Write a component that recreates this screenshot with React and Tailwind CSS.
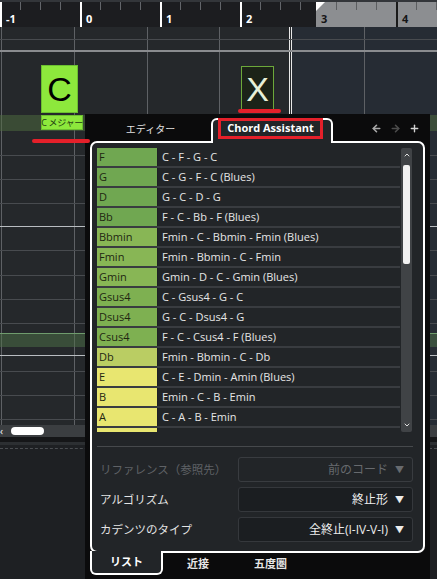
import { ArrowLeft, ArrowRight, Plus, ChevronUp, ChevronDown } from "lucide-react";

const chords = [
  { key: "F", prog: "C - F - G - C", color: "bg-[#70a751]" },
  { key: "G", prog: "C - G - F - C (Blues)", color: "bg-[#70a751]" },
  { key: "D", prog: "G - C - D - G", color: "bg-[#70a751]" },
  { key: "Bb", prog: "F - C - Bb - F (Blues)", color: "bg-[#70a751]" },
  { key: "Bbmin", prog: "Fmin - C - Bbmin - Fmin (Blues)", color: "bg-[#88b655]" },
  { key: "Fmin", prog: "Fmin - Bbmin - C - Fmin", color: "bg-[#88b655]" },
  { key: "Gmin", prog: "Gmin - D - C - Gmin (Blues)", color: "bg-[#88b655]" },
  { key: "Gsus4", prog: "C - Gsus4 - G - C", color: "bg-[#7eb051]" },
  { key: "Dsus4", prog: "G - C - Dsus4 - G", color: "bg-[#7eb051]" },
  { key: "Csus4", prog: "F - C - Csus4 - F (Blues)", color: "bg-[#7eb051]" },
  { key: "Db", prog: "Fmin - Bbmin - C - Db", color: "bg-[#bacd63]" },
  { key: "E", prog: "C - E - Dmin - Amin (Blues)", color: "bg-[#e8e670]" },
  { key: "B", prog: "Emin - C - B - Emin", color: "bg-[#e8e670]" },
  { key: "A", prog: "C - A - B - Emin", color: "bg-[#e8e670]" },
  { key: "", prog: "", color: "bg-[#e8e670]" },
];

// ruler cell: 4 quarters, number in the first one, ticks on the others
const RulerBar = ({ n, w, grey }) => {
  const last = w - 60;
  return (
    <div
      className={`flex h-full border-l-2 ${grey ? "border-[#1a1a1a] bg-[#8c8e91]" : "border-white"} ${w === 80 ? "w-[80px]" : "w-[76px]"}`}
    >
      <div className={`w-[18px] pl-[4px] pt-[11px] text-[11px] font-bold leading-none ${grey ? "text-[#151515]" : "text-white"}`}>
        {n}
      </div>
      {[20, 20, last].map((q, i) => (
        <div key={i} className={q === 20 ? "w-[20px]" : "w-[16px]"}>
          <div className={`h-[8px] w-px ${grey ? "bg-[#5c5e61]" : "bg-[#62656a]"}`} />
        </div>
      ))}
    </div>
  );
};

const Line = ({ white }) => (
  <div className={`h-px ${white ? "bg-[#b9bdc1]" : "bg-[#484b4f]"}`} />
);

const Timeline = () => (
  <div className="flex flex-col">
    <div className="h-[2px] bg-[#33363a]" />
    <div className="flex h-[25px] bg-[#1c1d20]">
      <div className="w-px" />
      <RulerBar n="-1" w={80} />
      <RulerBar n="0" w={80} />
      <RulerBar n="1" w={80} />
      <RulerBar n="2" w={76} />
      <div className="w-[2px] bg-white" />
      <div className="w-px" />
      <div className="relative">
        <svg className="absolute left-0 top-0 z-10" width="9" height="9" viewBox="0 0 9 9">
          <path d="M0 0H9L0 9Z" fill="#ffffff" />
        </svg>
        <div className="flex h-full">
          <div className="flex h-full w-[80px] bg-[#8c8e91]">
            <div className="w-[20px] pl-[5px] pt-[11px] text-[11px] font-bold leading-none text-[#151515]">3</div>
            {[0, 1, 2].map((i) => (
              <div key={i} className="w-[20px]">
                <div className="h-[8px] w-px bg-[#5c5e61]" />
              </div>
            ))}
          </div>
          <RulerBar n="4" w={80} grey />
        </div>
      </div>
    </div>

    {/* track canvas */}
    <div className="relative h-[398px]">
      <div className="flex h-full">
        <div className="w-px bg-[#25282b]" />
        <div className="w-[80px] border-l border-[#5e6165] bg-[#25282b]" />
        <div className="w-[80px] border-l border-[#5e6165] bg-[#25282b]" />
        <div className="w-[80px] border-l border-[#5e6165] bg-[#25282b]" />
        <div className="w-[76px] border-l border-[#5e6165] bg-[#25282b]" />
        <div className="w-px bg-[#e8e8e8]" />
        <div className="w-[2px] bg-[#25282b]" />
        <div className="w-px bg-[#e8e8e8]" />
        <div className="w-[79px] bg-[#262c34]" />
        <div className="w-[80px] border-l border-[#5e6165] bg-[#262c34]" />
      </div>
      <div className="pointer-events-none absolute inset-0 flex flex-col">
        <div className="h-[12px]" />
        <Line />
        <div className="h-[10px]" />
        <div className="h-[2px] bg-[#8a8c8f]" />
        <div className="h-[63px]" />
        <div className="h-[16px] bg-[#4f6e3f]/50" />
        <div className="h-[24px]" />
        <Line />
        <div className="h-[23px]" />
        <Line />
        <div className="h-[23px]" />
        <Line />
        <div className="h-[22px]" />
        <Line white />
        <div className="h-[23px]" />
        <Line />
        <div className="h-[24px]" />
        <Line />
        <div className="h-[23px]" />
        <Line />
        <div className="h-[23px]" />
        <Line />
        <div className="h-[9px]" />
        <div className="h-[14px] border-t border-[#6f9c6d] bg-[#4e7247]/50" />
        <div className="h-[8px]" />
        <Line white />
        <div className="h-[15px]" />
        <Line />
        <div className="h-[23px]" />
        <Line />
        <div className="h-[23px]" />
        <Line />
      </div>
    </div>

    <div className="flex h-[12px] items-center bg-[#3b3e41]">
      <span className="w-[4px] text-[10px] leading-none text-white">‹</span>
      <div className="ml-[7px] h-[8px] w-[33px] rounded-full bg-white" />
    </div>
    <div className="h-[5px] bg-[#151618]" />
    <div className="h-[3px] bg-[#2c2f32]" />
    <div className="h-[3px]" />
    <div className="border-t border-dashed border-[#4b4e52]" />
  </div>
);

const Dropdown = ({ label, value, dim }) => (
  <div className="flex h-[25px] items-center">
    <div className={`w-[141px] pl-[3px] text-[11.5px] ${dim ? "text-[#5f6266]" : "text-[#e4e4e4]"}`}>{label}</div>
    <div
      className={`flex h-full flex-1 items-center justify-end gap-[7px] rounded-[3px] border pr-[8px] text-[12px] ${
        dim ? "border-[#393c40] text-[#676a6e]" : "border-[#35383c] bg-[#1b1e21] text-[#ececec]"
      }`}
    >
      <span>{value}</span>
      <span className="text-[9px]">▼</span>
    </div>
  </div>
);

const Panel = () => (
  <div className="absolute left-[85px] top-[114px] flex h-[465px] w-[345px] flex-col bg-[#0b0b0c]">
    <div className="flex h-[27px] items-end pl-[5px]">
      <div className="w-[121px] self-center pt-[4px] text-center text-[10px] text-[#e2e2e2]">エディター</div>
      <div className="relative z-10 -mb-[2px] h-[25px] w-[122px] rounded-t-[6px] border-2 border-b-0 border-white bg-[#222528] px-[5px]">
        <div className="-mt-[2px] flex h-[21px] w-[105px] items-center justify-center border-[3px] border-[#e5202a] bg-[#222528] text-[11px] font-bold text-white">
          Chord Assistant
        </div>
      </div>
      <div className="flex flex-1 items-center justify-end gap-[8px] self-center pr-[10px] pt-[1px]">
        <ArrowLeft size={11} strokeWidth={3.5} className="text-[#a9a9a9]" />
        <ArrowRight size={11} strokeWidth={3.5} className="text-[#4c4c4c]" />
        <Plus size={11} strokeWidth={3} className="text-[#d2d2d2]" />
      </div>
    </div>

    <div className="mx-[5px] flex h-[412px] flex-col rounded-[7px] border-2 border-white bg-[#222528] pl-[5px] pr-[10px] pt-[5px]">
      <div className="flex h-[284px] gap-px">
        <div className="h-full w-[303px] overflow-hidden">
          {chords.map((c, i) => (
            <div key={i} className="flex h-[20px] border-b-2 border-[#393c40] text-[11px] leading-[18px]">
              <div className={`w-[61px] border-r border-[#1d2023] pl-[2px] text-[#1f2712] ${c.color}`}>{c.key}</div>
              <div className="flex-1 pl-[4px] text-[#e6e6e6]">{c.prog}</div>
            </div>
          ))}
        </div>
        <div className="flex h-full w-[11px] flex-col items-center rounded-[2px] bg-[#404346]">
          <ChevronUp size={8} strokeWidth={3} className="mt-[3px] text-[#dedede]" />
          <div className="mt-[6px] h-[99px] w-[7px] rounded-[2px] bg-[#f1f1f1]" />
          <div className="flex-1" />
          <ChevronDown size={8} strokeWidth={3} className="mb-[3px] text-[#dedede]" />
        </div>
      </div>
      <div className="mt-[14px] h-px bg-[#46494c]" />
      <div className="mt-[10px] flex flex-col gap-[5px]">
        <Dropdown label="リファレンス（参照先）" value="前のコード" dim />
        <Dropdown label="アルゴリズム" value="終止形" />
        <Dropdown label="カデンツのタイプ" value="全終止(I-IV-V-I)" />
      </div>
    </div>

    <div className="flex h-[22px] items-start text-[11px] font-bold text-[#e6e6e6]">
      <div className="relative z-10 ml-[5px] -mt-[2px] flex h-[24px] w-[73px] items-center justify-center rounded-b-[6px] border-2 border-t-0 border-white bg-[#222528] text-white">
        リスト
      </div>
      <div className="ml-[24px] flex h-[22px] items-center">近接</div>
      <div className="ml-[45px] flex h-[22px] items-center">五度圏</div>
    </div>
  </div>
);

export default function App() {
  return (
    <div className="relative h-[579px] w-[437px] overflow-hidden bg-[#1e2023] font-['Open_Sans','Noto_Sans_CJK_JP',sans-serif]">
      <Timeline />

      {/* chord events */}
      <div className="absolute left-[41px] top-[65px] flex h-[48px] w-[37px] items-center justify-center border border-[#6cbf30] bg-[#8de83c] font-['Liberation_Sans',sans-serif] text-[34px] leading-none text-black">
        C
      </div>
      <div className="absolute left-[41px] top-[115px] flex h-[15px] w-[42px] items-center justify-center whitespace-nowrap border border-[#6cbf30] bg-[#8de83c] text-[9px] leading-none tracking-[-0.3px] text-[#1d3a10]">
        C メジャー
      </div>
      <div className="absolute left-[241px] top-[66px] flex h-[45px] w-[33px] items-center justify-center border border-[#6ca83a] bg-[#1c2318] font-['Liberation_Sans',sans-serif] text-[34px] leading-none text-[#e8f0d8]">
        X
      </div>

      <Panel />

      {/* red markers */}
      <div className="absolute left-[238px] top-[109px] z-20 h-[4px] w-[43px] rounded-full bg-[#e5202a]" />
      <div className="absolute left-[32px] top-[139px] z-20 h-[4px] w-[58px] rounded-full bg-[#e5202a]" />
    </div>
  );
}
